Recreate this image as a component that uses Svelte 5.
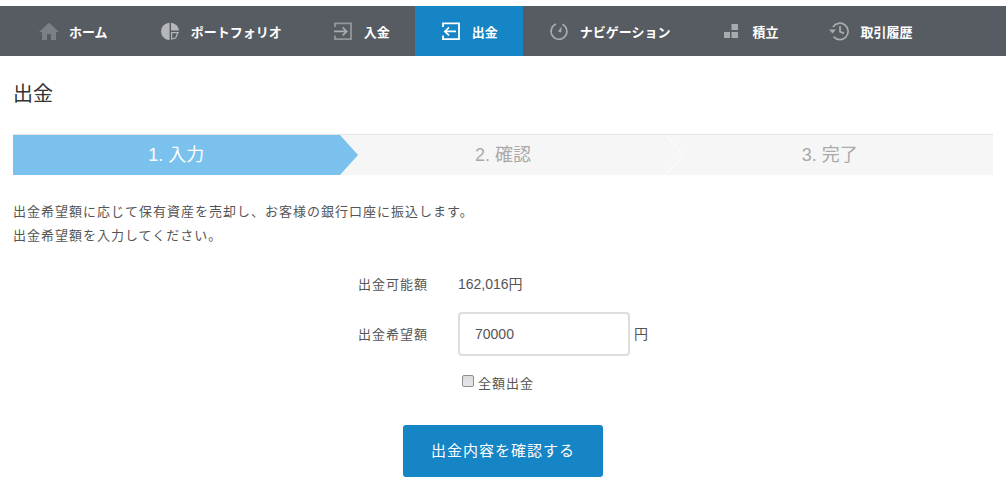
<script>
	const navItems = [
		{ label: 'ホーム', icon: 'home' },
		{ label: 'ポートフォリオ', icon: 'pie' },
		{ label: '入金', icon: 'in' },
		{ label: '出金', icon: 'out', active: true },
		{ label: 'ナビゲーション', icon: 'gauge' },
		{ label: '積立', icon: 'blocks' },
		{ label: '取引履歴', icon: 'history' }
	];
	const steps = ['1. 入力', '2. 確認', '3. 完了'];
	let amount = $state('70000');
	let all = $state(false);
</script>

<nav class="nav">
	{#each navItems as item}
		<a class="nav-item" class:active={item.active} href="#top">
			<svg class="icon" viewBox="0 0 20 20" width="20" height="20">
				{#if item.icon === 'home'}
					<path d="M10 1.7 L0 11 H3 V19 H8 V13 H12 V19 H17 V11 H20 Z" fill="#7b8085" />
				{:else if item.icon === 'pie'}
					<path d="M8.6 1.8 A8.6 8.6 0 0 0 8.6 19 Z" fill="#b4b6b9" />
					<path d="M10 1.8 A8.4 8.4 0 0 1 18 9.6 H10 Z" fill="#b4b6b9" />
					<path d="M10.6 11.6 H17 L14.6 17 L10.6 18 Z" fill="none" stroke="#b4b6b9" stroke-width="1.2" />
				{:else if item.icon === 'in'}
					<path d="M1 6 V2.4 H17 V18.2 H1 V14.6" fill="none" stroke="#93979a" stroke-width="1.8" />
					<path d="M0 10.4 H12.5 M8.6 6.4 L12.8 10.4 L8.6 14.4" fill="none" stroke="#a9abae" stroke-width="1.6" />
				{:else if item.icon === 'out'}
					<path d="M1 6 V2.4 H17 V18.2 H1 V14.6" fill="none" stroke="#fff" stroke-width="1.8" />
					<path d="M14 10.4 H3 M7 6.4 L2.8 10.4 L7 14.4" fill="none" stroke="#fff" stroke-width="1.6" />
				{:else if item.icon === 'gauge'}
					<path d="M6 3 A7.9 7.9 0 1 0 12.4 3.2" fill="none" stroke="#a9abae" stroke-width="1.6" />
					<path d="M8 10.6 L11.6 5.4 L11.2 11.4 Z" fill="#a9abae" />
				{:else if item.icon === 'blocks'}
					<rect x="9.5" y="3" width="6.5" height="6" fill="#a9abae" />
					<rect x="2" y="11" width="6" height="6" fill="#a9abae" />
					<rect x="9.5" y="11" width="6.5" height="6" fill="#a9abae" />
				{:else}
					<path d="M3 6 A8.2 8.2 0 1 1 3.6 15.6" fill="none" stroke="#a9abae" stroke-width="1.7" />
					<path d="M-1 8.4 H6 L2.5 12.6 Z" fill="#a9abae" />
					<path d="M10 5 V10.6 L14 12.4" fill="none" stroke="#a9abae" stroke-width="1.7" />
				{/if}
			</svg>
			<span>{item.label}</span>
		</a>
	{/each}
</nav>

<main class="page">
	<h1 class="title">出金</h1>

	<ol class="steps">
		{#each steps as step, i}
			<li class="step" class:current={i === 0}>{step}</li>
		{/each}
	</ol>

	<p class="lead">
		出金希望額に応じて保有資産を売却し、お客様の銀行口座に振込します。<br />
		出金希望額を入力してください。
	</p>

	<form class="form" onsubmit={(e) => e.preventDefault()}>
		<div class="row available">
			<span class="label">出金可能額</span>
			<span class="value">162,016円</span>
		</div>
		<div class="row">
			<label class="label wish" for="amount">出金希望額</label>
			<input id="amount" class="input" type="text" bind:value={amount} />
			<span class="unit">円</span>
		</div>
		<label class="check">
			<input type="checkbox" bind:checked={all} />
			<span>全額出金</span>
		</label>
		<button class="submit" type="submit">出金内容を確認する</button>
	</form>
</main>

<style>
	:global(body) {
		background: #fff;
		font-family: "Liberation Sans", "Noto Sans CJK JP", sans-serif;
		color: #555;
	}

	.nav {
		display: flex;
		height: 50px;
		margin-top: 6px;
		padding-left: 13px;
		background: #565c62;
	}

	.nav-item {
		display: flex;
		align-items: center;
		gap: 10px;
		padding: 0 25px 0 27px;
		color: #fff;
		font-size: 13px;
		font-weight: 700;
		text-decoration: none;
	}

	.nav-item:first-child { padding: 0 26px; }

	.nav-item.active { background: #1585c5; }

	.icon { flex: none; overflow: visible; }

	.page { padding: 0 13px; }

	.title {
		margin: 0;
		padding-top: 24px;
		height: 54px;
		box-sizing: border-box;
		font-size: 20px;
		font-weight: 400;
		line-height: 28px;
		color: #333;
	}

	.steps {
		display: flex;
		height: 40px;
		margin: 24px 0 0;
		padding: 0;
		list-style: none;
		background: #f6f6f6;
		border-top: 1px solid #e3e3e3;
		overflow: hidden;
	}

	.step {
		position: relative;
		flex: 1;
		line-height: 40px;
		text-align: center;
		font-size: 18px;
		color: #aaa;
	}

	.step.current {
		background: #7ac2ed;
		color: #fff;
	}

	.step.current::after,
	.step:nth-child(2)::after {
		content: '';
		position: absolute;
		top: 0;
		right: -18px;
		z-index: 1;
		border-style: solid;
		border-width: 20px 0 20px 18px;
		border-color: transparent transparent transparent #7ac2ed;
	}

	.step:nth-child(2)::after {
		border-left-color: #fff;
	}

	.step:nth-child(2)::before {
		content: '';
		position: absolute;
		top: 0;
		right: -17px;
		z-index: 2;
		border-style: solid;
		border-width: 20px 0 20px 18px;
		border-color: transparent transparent transparent #f6f6f6;
	}

	.lead {
		margin: 25px 0 0;
		font-size: 13px;
		line-height: 24px;
		letter-spacing: 1px;
		color: #555;
	}

	.form {
		width: 290px;
		margin: 0 auto;
		padding-top: 23px;
		display: flex;
		flex-direction: column;
		font-size: 14px;
	}

	.row {
		display: flex;
		align-items: center;
	}

	.available {
		height: 24px;
		margin-bottom: 17px;
	}

	.label {
		width: 100px;
		flex: none;
		font-size: 13px;
		letter-spacing: 1px;
	}

	.wish { padding-bottom: 1px; }

	.input {
		box-sizing: border-box;
		width: 172px;
		height: 44px;
		padding: 0 15px;
		border: 2px solid #ddd;
		border-radius: 4px;
		font: inherit;
		color: #555;
		outline: none;
	}

	.unit {
		margin: 0 0 3px 4px;
	}

	.check {
		display: flex;
		align-items: center;
		gap: 4px;
		margin: 17px 0 0 104px;
		height: 18px;
		font-size: 13px;
		letter-spacing: 1px;
	}

	.check input {
		appearance: none;
		box-sizing: border-box;
		width: 12px;
		height: 12px;
		margin: 0 0 2px;
		border: 1px solid #8f8f8f;
		border-radius: 2px;
		background: linear-gradient(#dcdcdc, #e6e6e6);
	}

	.submit {
		align-self: center;
		width: 200px;
		height: 52px;
		margin-top: 34px;
		padding: 0 0 3px;
		border: none;
		border-radius: 3px;
		background: #1585c5;
		color: #fff;
		font-family: inherit;
		font-size: 15px;
		letter-spacing: 1px;
	}
</style>
